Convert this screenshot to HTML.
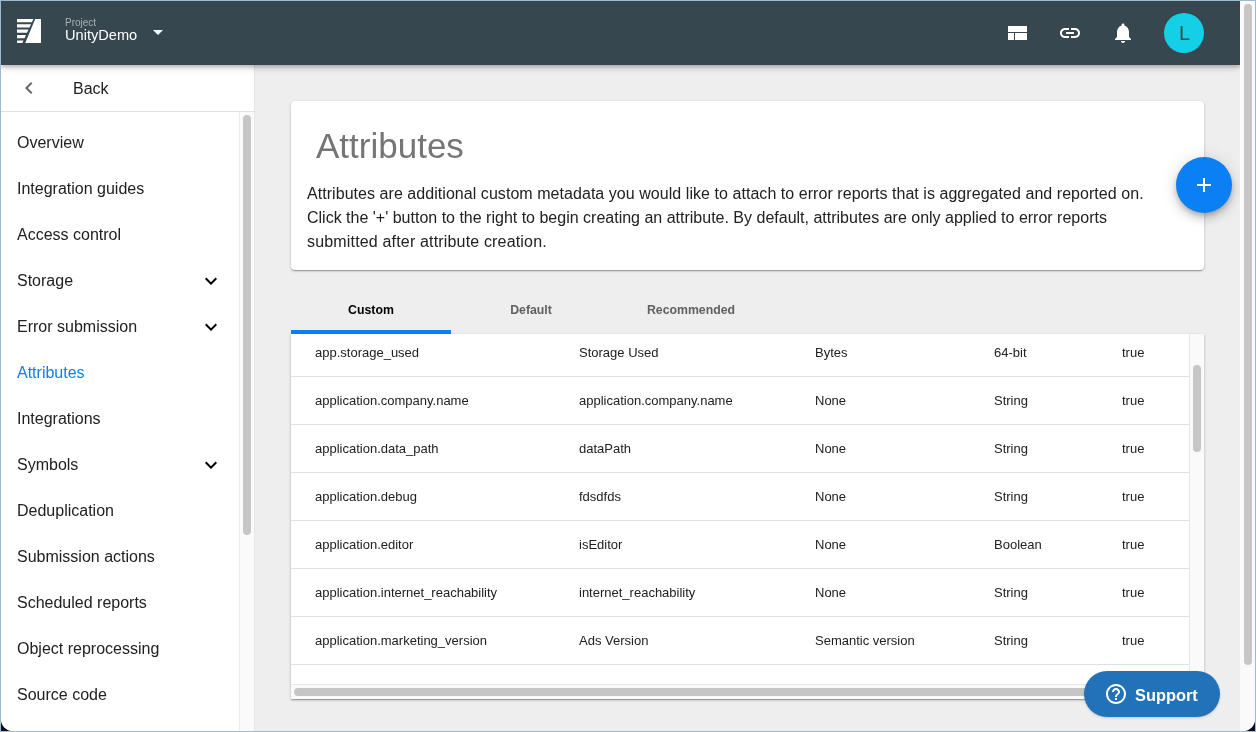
<!DOCTYPE html>
<html><head><meta charset="utf-8">
<style>
*{box-sizing:border-box}
html,body{margin:0;padding:0}
body{width:1256px;height:732px;overflow:hidden;background:#9dbccb;position:relative;font-family:"Liberation Sans",sans-serif;}
#black{position:absolute;left:1px;top:1px;width:1254px;height:730px;background:#0b0b1a}
#frame{will-change:transform;position:absolute;left:1px;top:1px;width:1254px;height:730px;overflow:hidden;background:#eeeeee;border-radius:0 0 12px 12px}
.abs{position:absolute}
#header{left:0;top:0;width:1239px;height:64px;background:#37474f;box-shadow:0 2px 4px rgba(0,0,0,.25),0 4px 8px rgba(0,0,0,.08);z-index:5}
#pscroll{left:1239px;top:0;width:15px;height:730px;background:#fafafa;z-index:7}
#pthumb{left:1243px;top:3px;width:8px;height:661px;background:#c6c6c6;border-radius:4px;z-index:8}
#sidebar{left:0;top:64px;width:254px;height:666px;background:#fff;border-right:1px solid #e6e6e6}
#back{left:0;top:0;width:253px;height:47px;border-bottom:1px solid #e0e0e0}
.txt{white-space:pre;line-height:1}
.nav{position:absolute;left:16px;font-size:16px;color:#212121;white-space:pre}
#sscroll{left:238px;top:47px;width:15px;height:619px;background:#fafafa;border-left:1px solid #ececec}
#sthumb{left:242px;top:50px;width:8px;height:420px;background:#c6c6c6;border-radius:4px}
#card{left:290px;top:100px;width:913px;height:169px;background:#fff;border-radius:4px;box-shadow:0 1px 3px rgba(0,0,0,.2),0 1px 1px rgba(0,0,0,.14),0 2px 1px -1px rgba(0,0,0,.12)}
#fab{left:1175px;top:156px;width:56px;height:56px;border-radius:50%;background:#0b7ff4;box-shadow:0 3px 5px -1px rgba(0,0,0,.2),0 6px 10px 0 rgba(0,0,0,.14),0 1px 18px 0 rgba(0,0,0,.12);z-index:3}
#table{left:290px;top:333px;width:913px;height:365px;background:#fff;box-shadow:0 1px 3px rgba(0,0,0,.2),0 1px 1px rgba(0,0,0,.14),0 2px 1px -1px rgba(0,0,0,.12);overflow:hidden}
.row{position:absolute;left:0;width:898px;height:48px;border-bottom:1px solid #e0e0e0}
.cell{position:absolute;font-size:13px;color:#212121;white-space:pre;line-height:1}
#tvs{left:898px;top:0;width:15px;height:350px;background:#fafafa;border-left:1px solid #e8e8e8}
#tvthumb{left:902px;top:31px;width:8px;height:87px;background:#c6c6c6;border-radius:4px}
#ths{left:0;top:350px;width:913px;height:15px;background:#fafafa;border-top:1px solid #e8e8e8}
#ththumb{left:3px;top:354px;width:880px;height:8px;background:#c6c6c6;border-radius:4px}
.tab{position:absolute;top:303px;width:160px;text-align:center;font-size:12.3px;font-weight:bold;white-space:pre;line-height:1}
#support{left:1083px;top:670px;width:136px;height:46px;border-radius:23px;background:#2272b9;z-index:6;box-shadow:0 1px 3px rgba(0,0,0,.15)}
</style></head>
<body>
<div id="black"></div>
<div id="frame">
  <div id="header" class="abs">
    <svg class="abs" style="left:16px;top:18px" width="24" height="24" viewBox="0 0 24 24">
      <path fill="#fff" d="M18.2 0H24V24H8.2Z"/>
      <path fill="#fff" d="M0 0H16.4L14.9 3.2H0Z M0 5.2H14L12.5 8.4H0Z M0 10.6H11.5L10 13.8H0Z M0 16H9L7.5 19.2H0Z M0 21.4H6.5L5.3 24H0Z"/>
    </svg>
    <div class="abs txt" style="left:64px;top:17px;font-size:10px;color:#a7b0b5">Project</div>
    <div class="abs txt" style="left:64px;top:27px;font-size:14.6px;color:#fff">UnityDemo</div>
    <svg class="abs" style="left:145px;top:19px" width="24" height="24" viewBox="0 0 24 24"><path fill="#fff" d="M7 10l5 5 5-5z"/></svg>
    <svg class="abs" style="left:1004px;top:20px" width="24" height="24" viewBox="0 0 24 24"><path fill="#fff" d="M3 19h6v-7H3v7zm7 0h12v-7H10v7zM3 5v6h19V5H3z"/></svg>
    <svg class="abs" style="left:1057px;top:20px" width="24" height="24" viewBox="0 0 24 24"><path fill="#fff" d="M3.9 12c0-1.71 1.39-3.1 3.1-3.1h4V7H7c-2.76 0-5 2.24-5 5s2.24 5 5 5h4v-1.9H7c-1.71 0-3.1-1.39-3.1-3.1zM8 13h8v-2H8v2zm9-6h-4v1.9h4c1.71 0 3.1 1.39 3.1 3.1s-1.39 3.1-3.1 3.1h-4V17h4c2.76 0 5-2.24 5-5s-2.24-5-5-5z"/></svg>
    <svg class="abs" style="left:1110px;top:19.5px" width="24" height="24" viewBox="0 0 24 24"><path fill="#fff" d="M12 22c1.1 0 2-.9 2-2h-4c0 1.1.89 2 2 2zm6-6v-5c0-3.07-1.64-5.64-4.5-6.32V4c0-.83-.67-1.5-1.5-1.5s-1.5.67-1.5 1.5v.68C7.63 5.36 6 7.92 6 11v5l-2 2v1h16v-1l-2-2z"/></svg>
    <div class="abs" style="left:1163px;top:12px;width:40px;height:40px;border-radius:50%;background:#14cfe6"></div>
    <div class="abs txt" style="left:1178px;top:22px;font-size:20px;color:#37474f">L</div>
  </div>
  <div id="pscroll" class="abs"></div>
  <div id="pthumb" class="abs"></div>

  <div id="sidebar" class="abs">
    <div id="back" class="abs">
      <svg class="abs" style="left:16px;top:11px" width="24" height="24" viewBox="0 0 24 24"><path fill="#666" d="M15.41 7.41L14 6l-6 6 6 6 1.41-1.41L10.83 12z"/></svg>
      <div class="abs txt" style="left:72px;top:16px;font-size:16px;color:#212121">Back</div>
    </div>
  </div>
  <div id="sscroll" class="abs" style="left:238px;top:111px"></div>
  <div id="sthumb" class="abs" style="left:242px;top:114px"></div>
  <div id="navlist">
    <div class="nav txt" style="top:134px">Overview</div>
    <div class="nav txt" style="top:180px">Integration guides</div>
    <div class="nav txt" style="top:226px">Access control</div>
    <div class="nav txt" style="top:272px">Storage</div>
    <div class="nav txt" style="top:318px">Error submission</div>
    <div class="nav txt" style="top:364px;color:#0b7ff4">Attributes</div>
    <div class="nav txt" style="top:410px">Integrations</div>
    <div class="nav txt" style="top:456px">Symbols</div>
    <div class="nav txt" style="top:502px">Deduplication</div>
    <div class="nav txt" style="top:548px">Submission actions</div>
    <div class="nav txt" style="top:594px">Scheduled reports</div>
    <div class="nav txt" style="top:640px">Object reprocessing</div>
    <div class="nav txt" style="top:686px">Source code</div>
    <svg class="abs" style="left:198px;top:268px" width="24" height="24" viewBox="0 0 24 24"><path fill="#000" d="M16.59 8.59L12 13.17 7.41 8.59 6 10l6 6 6-6z"/></svg>
    <svg class="abs" style="left:198px;top:314px" width="24" height="24" viewBox="0 0 24 24"><path fill="#000" d="M16.59 8.59L12 13.17 7.41 8.59 6 10l6 6 6-6z"/></svg>
    <svg class="abs" style="left:198px;top:452px" width="24" height="24" viewBox="0 0 24 24"><path fill="#000" d="M16.59 8.59L12 13.17 7.41 8.59 6 10l6 6 6-6z"/></svg>
  </div>

  <div id="card" class="abs">
    <div class="abs txt" style="left:25px;top:27px;font-size:35px;color:#757575">Attributes</div>
    <div class="abs" style="left:16px;top:81px;width:890px;font-size:16px;line-height:24px;color:#212121;white-space:pre"><div style="letter-spacing:0.05px">Attributes are additional custom metadata you would like to attach to error reports that is aggregated and reported on.</div><div>Click the '+' button to the right to begin creating an attribute. By default, attributes are only applied to error reports</div><div style="letter-spacing:0.17px">submitted after attribute creation.</div></div>
  </div>
  <div id="fab" class="abs">
    <svg class="abs" style="left:16px;top:16px" width="24" height="24" viewBox="0 0 24 24"><path fill="#fff" d="M19 13h-6v6h-2v-6H5v-2h6V5h2v6h6v2z"/></svg>
  </div>

  <div class="tab" style="left:290px;color:#000">Custom</div>
  <div class="tab" style="left:450px;color:#616161">Default</div>
  <div class="tab" style="left:610px;color:#616161">Recommended</div>
  <div class="abs" style="left:290px;top:329px;width:160px;height:4px;background:#0b7ff4"></div>

  <div id="table" class="abs">
    <div id="rows"><!--ROWS-->
<div class="row" style="top:-5px">
<div class="cell" style="left:24px;top:17px">app.storage_used</div>
<div class="cell" style="left:288px;top:17px">Storage Used</div>
<div class="cell" style="left:524px;top:17px">Bytes</div>
<div class="cell" style="left:703px;top:17px">64-bit</div>
<div class="cell" style="left:831px;top:17px">true</div>
</div>
<div class="row" style="top:43px">
<div class="cell" style="left:24px;top:17px">application.company.name</div>
<div class="cell" style="left:288px;top:17px">application.company.name</div>
<div class="cell" style="left:524px;top:17px">None</div>
<div class="cell" style="left:703px;top:17px">String</div>
<div class="cell" style="left:831px;top:17px">true</div>
</div>
<div class="row" style="top:91px">
<div class="cell" style="left:24px;top:17px">application.data_path</div>
<div class="cell" style="left:288px;top:17px">dataPath</div>
<div class="cell" style="left:524px;top:17px">None</div>
<div class="cell" style="left:703px;top:17px">String</div>
<div class="cell" style="left:831px;top:17px">true</div>
</div>
<div class="row" style="top:139px">
<div class="cell" style="left:24px;top:17px">application.debug</div>
<div class="cell" style="left:288px;top:17px">fdsdfds</div>
<div class="cell" style="left:524px;top:17px">None</div>
<div class="cell" style="left:703px;top:17px">String</div>
<div class="cell" style="left:831px;top:17px">true</div>
</div>
<div class="row" style="top:187px">
<div class="cell" style="left:24px;top:17px">application.editor</div>
<div class="cell" style="left:288px;top:17px">isEditor</div>
<div class="cell" style="left:524px;top:17px">None</div>
<div class="cell" style="left:703px;top:17px">Boolean</div>
<div class="cell" style="left:831px;top:17px">true</div>
</div>
<div class="row" style="top:235px">
<div class="cell" style="left:24px;top:17px">application.internet_reachability</div>
<div class="cell" style="left:288px;top:17px">internet_reachability</div>
<div class="cell" style="left:524px;top:17px">None</div>
<div class="cell" style="left:703px;top:17px">String</div>
<div class="cell" style="left:831px;top:17px">true</div>
</div>
<div class="row" style="top:283px">
<div class="cell" style="left:24px;top:17px">application.marketing_version</div>
<div class="cell" style="left:288px;top:17px">Ads Version</div>
<div class="cell" style="left:524px;top:17px">Semantic version</div>
<div class="cell" style="left:703px;top:17px">String</div>
<div class="cell" style="left:831px;top:17px">true</div>
</div>
<div class="row" style="top:331px">
<div class="cell" style="left:24px;top:17px">application.unity_version</div>
<div class="cell" style="left:288px;top:17px">Unity Version</div>
<div class="cell" style="left:524px;top:17px">None</div>
<div class="cell" style="left:703px;top:17px">String</div>
<div class="cell" style="left:831px;top:17px">true</div>
</div>
<!--/ROWS--></div>
    <div id="tvs" class="abs"></div>
    <div id="tvthumb" class="abs"></div>
    <div id="ths" class="abs"></div>
    <div id="ththumb" class="abs"></div>
  </div>

  <div id="support" class="abs">
    <svg class="abs" style="left:20px;top:11px" width="24" height="24" viewBox="0 0 24 24"><path fill="#fff" d="M11 18h2v-2h-2v2zm1-16C6.48 2 2 6.48 2 12s4.48 10 10 10 10-4.48 10-10S17.52 2 12 2zm0 18c-4.41 0-8-3.59-8-8s3.59-8 8-8 8 3.59 8 8-3.59 8-8 8zm0-14c-2.21 0-4 1.79-4 4h2c0-1.1.9-2 2-2s2 .9 2 2c0 2-3 1.75-3 5h2c0-2.25 3-2.5 3-5 0-2.21-1.79-4-4-4z"/></svg>
    <div class="abs txt" style="left:51px;top:15.5px;font-size:16.4px;font-weight:bold;color:#fff">Support</div>
  </div>
</div>
</body></html>
